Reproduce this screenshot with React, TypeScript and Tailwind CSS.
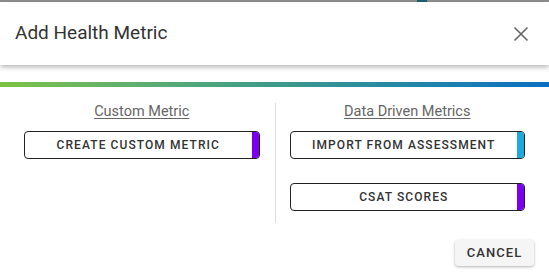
export default function App() {
  const font = { fontFamily: "Roboto, 'Liberation Sans', sans-serif" };

  const MetricButton = ({ label, strip }: { label: string; strip: string }) => (
    <button className="flex h-[28px] w-full items-stretch overflow-hidden rounded-[4px] border border-[#222] bg-white">
      <span className="flex flex-1 items-center justify-center text-[12px] font-medium tracking-[0.09em] text-[#333]">
        {label}
      </span>
      <span className={`w-[7px] ${strip}`} />
    </button>
  );

  return (
    <div className="relative h-[274px] w-[549px] overflow-hidden bg-white" style={font}>
      {/* backdrop strip */}
      <div className="flex h-[2px] bg-[#8f8f8f]">
        <div className="ml-[417px] w-[10px] bg-[#1f5f73]" />
      </div>

      {/* Header */}
      <div className="relative z-10 flex h-[63px] items-center justify-between bg-white pl-[15px] pr-5 shadow-[0_2px_5px_rgba(0,0,0,0.3)]">
        <h1 className="text-[19px] text-[#333]">Add Health Metric</h1>
        <svg width="16" height="16" viewBox="0 0 16 16" className="text-[#666]">
          <path d="M1.5 1.5 L14.5 14.5 M14.5 1.5 L1.5 14.5" stroke="currentColor" strokeWidth="1.6" />
        </svg>
      </div>

      {/* Gradient bar */}
      <div className="mt-[17px] h-[5px] bg-gradient-to-r from-[#7dc242] via-[#3d9a8a] to-[#0b6fc2]" />

      {/* Body */}
      <div className="grid grid-cols-2 px-6 pt-4">
        <div className="flex flex-col items-center pr-[15px]">
          <span className="text-[14.5px] leading-[18px] text-[#666] underline underline-offset-2">
            Custom Metric
          </span>
          <div className="mt-[10px] w-full">
            <MetricButton label="CREATE CUSTOM METRIC" strip="bg-[#7a00f0]" />
          </div>
        </div>
        <div className="flex h-[120px] flex-col items-center border-l border-[#ddd] pl-[14px]">
          <span className="text-[14.5px] leading-[18px] text-[#666] underline underline-offset-2">
            Data Driven Metrics
          </span>
          <div className="mt-[10px] w-full">
            <MetricButton label="IMPORT FROM ASSESSMENT" strip="bg-[#1ea8dc]" />
          </div>
          <div className="mt-[24px] w-full">
            <MetricButton label="CSAT SCORES" strip="bg-[#7a00f0]" />
          </div>
        </div>
      </div>

      {/* Footer */}
      <div className="flex justify-end pr-[15px] pt-[17px]">
        <button className="h-[26px] w-[79px] rounded-[4px] bg-[#f5f5f5] text-[13px] font-medium tracking-[0.08em] text-[#333] shadow-[0_1px_3px_rgba(0,0,0,0.3)]">
          CANCEL
        </button>
      </div>
    </div>
  );
}
